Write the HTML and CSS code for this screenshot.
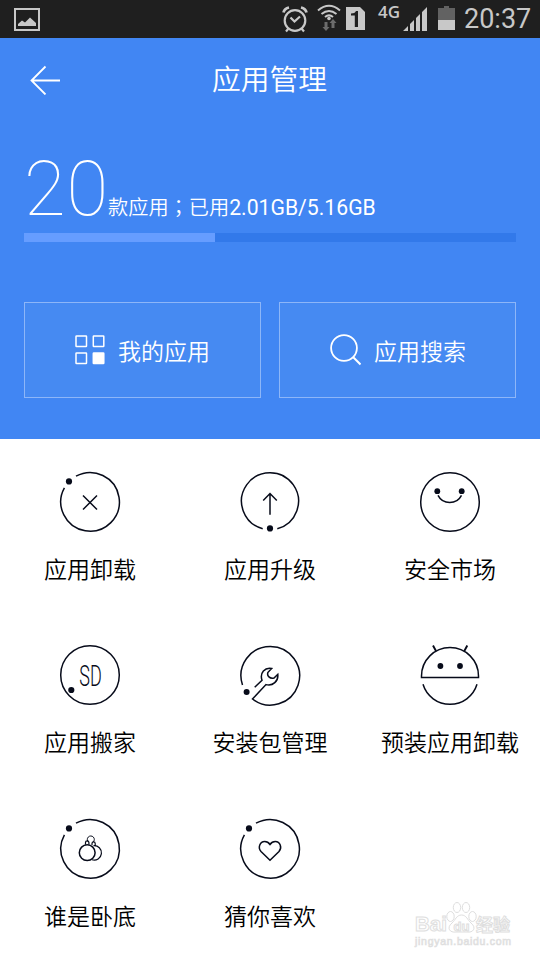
FILE: index.html
```html
<!DOCTYPE html>
<html lang="zh-CN">
<head>
    <meta charset="UTF-8">
    <meta name="viewport" content="width=device-width, initial-scale=1.0">
    <title>应用管理</title>
    <link rel="stylesheet" href="styles.css">
</head>
<body>
    <div class="status-bar">
        <svg class="status-photo" width="26" height="23" viewBox="0 0 26 23">
            <rect x="1" y="1" width="24" height="21" fill="none" stroke="#c8c8c8" stroke-width="2"/>
            <path d="M4 18v-2l4-3.500 3 2 5-5 6 5.500v3z" fill="#c8c8c8"/>
        </svg>
        <div class="status-icons">
            <svg class="alarm" width="26" height="28" viewBox="0 0 26 28">
                <g fill="none" stroke="#c8c8c8" stroke-width="2.200">
                    <circle cx="13" cy="15.500" r="10.300"/>
                    <path d="M8.500 12.500l4 4 5.500-5M6.500 23.500l-2.500 3M19.500 23.500l2.500 3"/>
                    <path d="M1.500 7.500q1-4 5.500-5M24.500 7.500q-1-4-5.500-5" stroke-width="2.800"/>
                </g>
            </svg>
            <svg class="wifi" width="24" height="28" viewBox="0 0 24 28">
                <g fill="none" stroke="#c8c8c8" stroke-width="2">
                    <path d="M1 6.500q11-9.500 22 0M4.500 10q7.500-6 15 0M8 13q4-3.200 8 0"/>
                </g>
                <circle cx="12" cy="14.500" r="1.800" fill="#c8c8c8"/>
                <path d="M7.500 18h3v5h2L9 27l-3.500-4h2zM14.500 24v-5h-2l3.500-4 3.500 4h-2v5z" fill="#6c6c6c"/>
            </svg>
            <svg class="sim" width="19" height="23" viewBox="0 0 19 23">
                <path d="M0 0h14l5 5v18H0z" fill="#c8c8c8"/>
                <path d="M5 6.500q4 0 5-2.500h2v16H8.800V8.500H5z" fill="#1f1f1f"/>
            </svg>
            <span class="network">4G</span>
            <svg class="signal" width="24" height="24" viewBox="0 0 24 24">
                <path d="M0 24l5-5v5zM7 24v-7l4-4v11zM13 24V11l4-4v17zM19 24V5l5-5v24z" fill="#c8c8c8"/>
            </svg>
            <svg class="battery" width="17" height="24" viewBox="0 0 17 24">
                <path d="M6 0h5v2h6v12H0V2h6z" fill="#626262"/>
                <path d="M0 14h17v10H0z" fill="#c8c8c8"/>
            </svg>
            <span class="clock">20:37</span>
        </div>
    </div>

    <div class="header">
        <div class="title-bar">
            <svg class="back" width="32" height="30" viewBox="0 0 32 30">
                <path d="M15.500 1.500L1.500 15.500l14 14M1.500 15.500h28.500" fill="none" stroke="#fff" stroke-width="1.800"/>
            </svg>
            <h1>应用管理</h1>
        </div>

        <div class="summary">
            <span class="count">20</span>
            <span class="detail">款应用<span class="mark" lang="zh-TW">；</span>已用<span class="size">2.01GB/5.16GB</span></span>
        </div>
        <div class="progress"><div class="progress-used"></div></div>

        <div class="buttons">
            <a class="button">
                <svg width="30" height="30" viewBox="0 0 30 30">
                    <g fill="none" stroke="#fff" stroke-width="1.500">
                        <rect x="1" y="1" width="10.500" height="10.500" rx=".5"/>
                        <rect x="18.300" y="1" width="10.500" height="10.500" rx=".5"/>
                        <rect x="1" y="18" width="10.500" height="10.500" rx=".5"/>
                        <rect x="18.300" y="18" width="10.500" height="10.500" rx=".5" fill="#fff"/>
                    </g>
                </svg>
                <span>我的应用</span>
            </a>
            <a class="button">
                <svg width="32" height="32" viewBox="0 0 32 32">
                    <circle cx="15" cy="14" r="12.900" fill="none" stroke="#fff" stroke-width="1.800"/>
                    <path d="M24 23l7.500 7.500" stroke="#fff" stroke-width="2"/>
                </svg>
                <span>应用搜索</span>
            </a>
        </div>
    </div>

    <div class="menu">
        <div class="menu-item">
            <svg class="icon" viewBox="0 0 60 60">
                <path d="M16 4.200A29.300 29.300 0 1 1 4.400 15.800M23 23.500l14 14M37 23.500l-14 14"/>
                <circle class="dot" cx="9" cy="9.400" r="3.100"/>
            </svg>
            <span>应用卸载</span>
        </div>
        <div class="menu-item">
            <svg class="icon" viewBox="0 0 60 60">
                <path d="M22.700 56.700A28.500 28.500 0 1 1 37.300 56.700M30 42.700V21.500M23.200 28.500l6.800-7 6.800 7"/>
                <circle class="dot" cx="30" cy="56.400" r="3.100"/>
            </svg>
            <span>应用升级</span>
        </div>
        <div class="menu-item">
            <svg class="icon" viewBox="0 0 60 60">
                <circle cx="30" cy="30" r="29.300"/>
                <path d="M18 23.300a13.200 13.200 0 0 0 23.500 0"/>
                <circle class="dot" cx="17.300" cy="19.200" r="2.900"/>
                <circle class="dot" cx="41.700" cy="19.200" r="2.900"/>
            </svg>
            <span>安全市场</span>
        </div>
        <div class="menu-item">
            <svg class="icon" viewBox="0 0 60 60">
                <circle cx="30" cy="30" r="29.300"/>
                <circle class="dot" cx="11.300" cy="45" r="3.100"/>
                <text class="sd" transform="translate(30.500 41) scale(.6 1)">SD</text>
            </svg>
            <span>应用搬家</span>
        </div>
        <div class="menu-item">
            <svg class="icon" viewBox="0 0 60 60">
                <path d="M2.500 40A29.300 29.300 0 1 1 12.500 54L26 39.600C33 41.500 38.500 36 37.800 29.300L34 33C30 34 26.500 31 28 27.300L31.700 23.500C25 22 19.500 28 22 35.200L14.700 42.300"/>
                <circle class="dot" cx="6.600" cy="47" r="3"/>
            </svg>
            <span>安装包管理</span>
        </div>
        <div class="menu-item">
            <svg class="icon" viewBox="0 0 60 60">
                <path d="M1.500 32.400V31a28.500 28.500 0 0 1 57 0v1.400zM3 39.300a28.200 28.200 0 0 0 54 0"/>
                <path d="M16 6L13 .5M44.300 6l3-5.500" stroke-width="1.900"/>
                <circle class="dot" cx="20.400" cy="21" r="2.900"/>
                <circle class="dot" cx="40" cy="21" r="2.900"/>
            </svg>
            <span>预装应用卸载</span>
        </div>
        <div class="menu-item">
            <svg class="icon" viewBox="0 0 60 60">
                <path d="M16 4.200A29.300 29.300 0 1 1 4.400 15.800"/>
                <circle class="dot" cx="9" cy="9.400" r="3.100"/>
                <circle cx="27.200" cy="33.700" r="7.900"/>
                <path d="M33.500 26.700a7.200 7.200 0 1 1-1.500 14M25.500 25.800v-2.200a1.700 1.700 0 0 1 3.400 0v2.200M32 26.200v-1.700a1.600 1.600 0 0 1 3.200 0V27" stroke-width="1.200"/>
                <path d="M28.600 23.200a3.500 3.500 0 1 1 4.400 0" stroke-width="1"/>
            </svg>
            <span>谁是卧底</span>
        </div>
        <div class="menu-item">
            <svg class="icon" viewBox="0 0 60 60">
                <path d="M16 4.200A29.300 29.300 0 1 1 4.400 15.800"/>
                <circle class="dot" cx="9" cy="9.400" r="3.100"/>
                <path d="M30 41.200L21 32.500C17.500 28.500 20 22.500 24.700 22.500Q28 22.500 30 25.500Q32 22.500 35.300 22.500C40 22.500 42.500 28.500 39 32.500z"/>
            </svg>
            <span>猜你喜欢</span>
        </div>
    </div>

    <!-- watermark -->
    <svg class="watermark" width="104" height="50" viewBox="0 0 104 50">
        <g class="paw">
            <ellipse cx="39.500" cy="15.500" rx="3.700" ry="5"/>
            <ellipse cx="46" cy="6.500" rx="3.700" ry="5"/>
            <ellipse cx="55" cy="6.500" rx="3.700" ry="5"/>
            <ellipse cx="61.500" cy="15.500" rx="3.700" ry="5"/>
            <path d="M50.500 14c-5 0-6 5-9.500 8-6 5-2 10 4 9h11c6 1 10-4 4-9-3.500-3-4.500-8-9.500-8z"/>
        </g>
        <text class="wm-logo" x="4" y="30" textLength="32" lengthAdjust="spacingAndGlyphs">Bai</text>
        <text class="wm-du" x="42.500" y="29.500" textLength="16">du</text>
        <text class="wm-cn" x="65" y="29.500">经验</text>
        <text class="wm-url" x="4" y="44" textLength="96">jingyan.baidu.com</text>
    </svg>
</body>
</html>
```
FILE: styles.css
```css
* {
    box-sizing: border-box;
}

body {
    margin: 0;
    width: 540px;
    height: 960px;
    position: relative;
    overflow: hidden;
    background: #fff;
    color: #000;
    font-family: Roboto, "Noto Sans CJK SC", sans-serif;
    font-weight: 350;
}

svg {
    display: block;
    flex: none;
}

/* Status bar */
.status-bar {
    display: flex;
    justify-content: space-between;
    height: 38px;
    padding: 0 9px 0 14px;
    background: #1f1f1f;
    color: #c8c8c8;
}

.status-photo {
    margin-top: 8px;
}

.status-icons {
    display: flex;
    align-items: flex-start;
}

.alarm {
    margin: 5px 9px 0 0;
}

.wifi {
    margin: 4px 5px 0 0;
}

.sim {
    margin: 7px 13px 0 0;
}

.network {
    width: 22px;
    margin-right: 3px;
    font: 600 17px/24px "Open Sans", sans-serif;
}

.signal {
    margin: 7px 11px 0 0;
}

.battery {
    margin: 6px 9px 0 0;
}

.clock {
    width: 67px;
    font-size: 27px;
    line-height: 38px;
    font-weight: 400;
    white-space: nowrap;
}

/* Blue header */
.header {
    height: 401px;
    padding: 0 24px;
    background: #4186f3;
    color: #fff;
}

.title-bar {
    display: flex;
    align-items: center;
    height: 84px;
    padding-left: 6px;
}

.title-bar h1 {
    flex: 1;
    margin: 0 39px 0 0;
    text-align: center;
    font-size: 28.8px;
    line-height: 40px;
    font-weight: 350;
}

.summary {
    display: flex;
    align-items: baseline;
    height: 111px;
    padding-top: 22px;
    white-space: nowrap;
}

.count {
    width: 84px;
    font-size: 76px;
    line-height: 90px;
    font-weight: 100;
    letter-spacing: 1px;
}

.detail {
    font-size: 20.2px;
}

.mark {
    font-family: "Noto Sans CJK TC", sans-serif;
}

.size {
    font-size: 21.2px;
    font-weight: 400;
}

.progress {
    height: 9px;
    background: #3279ea;
}

.progress-used {
    width: 191px;
    height: 9px;
    background: #669dff;
}

.buttons {
    display: flex;
    gap: 18px;
    margin-top: 60px;
}

.button {
    flex: 1;
    display: flex;
    align-items: center;
    justify-content: center;
    gap: 13px;
    height: 96px;
    border: 1px solid #8db6f8;
    background: #468af2;
    font-size: 23px;
}

/* App menu */
.menu {
    display: grid;
    grid-template-columns: repeat(3, 180px);
    grid-template-rows: 173px 174px 174px;
}

.menu-item {
    display: flex;
    flex-direction: column;
    align-items: center;
    padding-top: 33px;
    font-size: 23px;
    line-height: 34px;
    white-space: nowrap;
}

.icon {
    width: 60px;
    height: 60px;
    margin-bottom: 22px;
    overflow: visible;
    fill: none;
    stroke: #070b1a;
    stroke-width: 1.5;
}

.icon .dot {
    fill: #070b1a;
    stroke: none;
}

.sd {
    fill: #070b1a;
    stroke: none;
    font-size: 30px;
    font-weight: 300;
    text-anchor: middle;
}

/* Watermark */
.watermark {
    position: absolute;
    left: 411px;
    top: 901px;
    fill: #fff;
    stroke: #dedede;
    stroke-width: 1;
    font-family: "Liberation Sans", "Noto Sans CJK SC", sans-serif;
    font-weight: 700;
}

.wm-logo {
    font-size: 21px;
}

.wm-du {
    font-size: 13px;
}

.wm-cn {
    font-size: 17px;
}

.wm-url {
    font-size: 10.5px;
    font-weight: 400;
    fill: #f4f4f4;
    stroke-width: .7;
}
```
